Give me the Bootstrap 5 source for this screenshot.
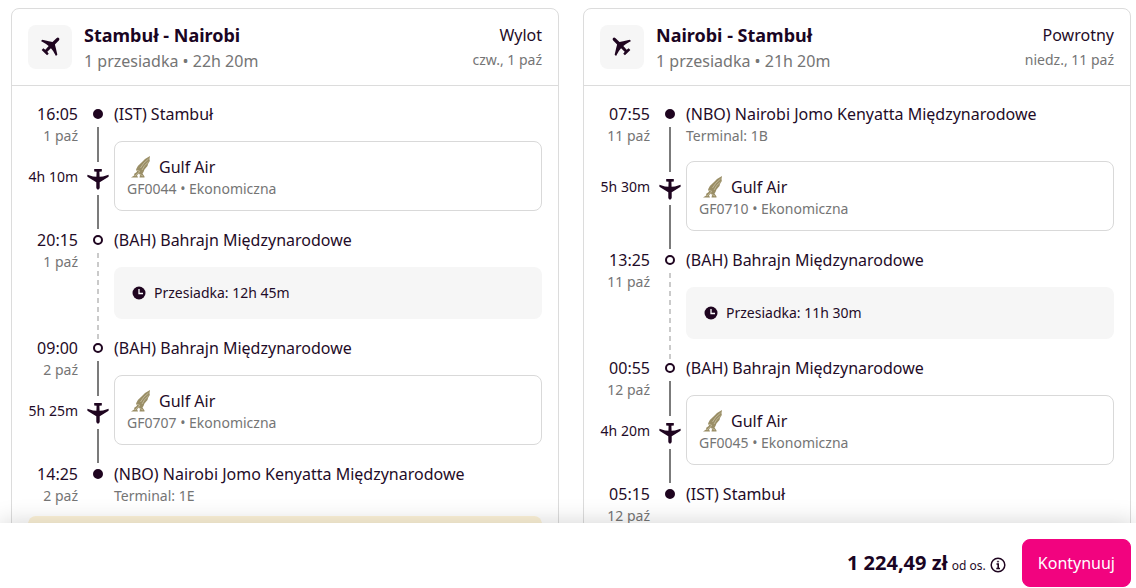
<!DOCTYPE html>
<html lang="pl">
<head>
<meta charset="utf-8">
<meta name="viewport" content="width=device-width, initial-scale=1">
<title>Stambuł - Nairobi</title>
<link href="https://cdn.jsdelivr.net/npm/bootstrap@5.3.0/dist/css/bootstrap.min.css" rel="stylesheet">
<style>
  body { font-family: "Noto Sans", sans-serif; font-size: 16px; line-height: 24px; color: #1f0c28; background: #fff; }
  .trips { min-height: 0; overflow-y: auto; scrollbar-width: none; padding: 8px 5px 0 11px; }
  .trips-grid { display: grid; grid-template-columns: 1fr 1fr; gap: 24px; }
  @media (max-width: 767px) { .trips-grid { grid-template-columns: 1fr; } }
  .trip { border: 1px solid #dcdcdc; border-radius: 8px; }
  .trip-head { padding: 14px 16px; border-bottom: 1px solid #dcdcdc; }
  .trip-head h2 { font-size: 18px; line-height: 24px; font-weight: 700; color: #1a0523; }
  .trip-icon { width: 44px; height: 44px; border-radius: 8px; background: #f6f6f6; flex: none; margin-top: 2px; }
  .trip-icon svg { overflow: visible; }
  .trip-body { padding: 16px; }
  .muted { color: #757575; }
  .fine { font-size: 14px; line-height: 20px; }
  .leg { display: grid; grid-template-columns: 50px 36px 1fr; grid-template-rows: auto 1fr; }
  .when { grid-area: 1 / 1 / 3 / 2; text-align: right; }
  .span-time { grid-area: 1 / 1 / 3 / 2; align-self: center; padding-top: 24px; text-align: right; white-space: nowrap; }
  .rail { grid-area: 1 / 2 / 3 / 3; display: flex; flex-direction: column; align-items: center; padding: 7px 0 0 4px; }
  .place { grid-area: 1 / 3; }
  .segment { grid-area: 2 / 3; margin: 15px 0 17px; border-radius: 8px; }
  .flight { border: 1px solid #d9d9d9; padding: 13px 12px 11px; }
  .layover { background: #f6f6f6; padding: 16px 18px; }
  .stop-dot { width: 10px; height: 10px; border: 2px solid #1f0520; border-radius: 50%; flex: none; }
  .stop-dot.full { background: #1f0520; }
  .track { flex: 1; width: 2px; background: #7b7b7b; }
  .track.upper { margin: 8px 0 6px; }
  .track.lower { margin: 5px 0 -1px; }
  .track.dashes { margin: 8px 0 -4px; background: repeating-linear-gradient(#cacaca 0 5px, transparent 5px 9px); }
  .notice { background: #fdf3d8; border-radius: 8px; min-height: 56px; margin-top: 10px; }
  .pay-bar { position: relative; background: #fff; padding: 16px 5px 1px; box-shadow: 0 0 24px rgba(0,0,0,.18); }
  .price { font-size: 20px; font-weight: 700; color: #1a0523; }
  .price-box { padding-top: 3px; }
  .tiny { font-size: 12px; }
  .btn-pay { --bs-btn-color: #fff; --bs-btn-bg: #f2037f; --bs-btn-hover-color: #fff; --bs-btn-hover-bg: #d4026f; --bs-btn-border-color: #f2037f; --bs-btn-padding-x: 15px; --bs-btn-padding-y: 11px; --bs-btn-border-radius: 8px; --bs-btn-line-height: 24px; }
</style>
</head>
<body>
<svg width="0" height="0" class="position-absolute" aria-hidden="true">
  <defs>
    <symbol id="plane" viewBox="-11 -11 22 22">
      <path fill="#1f0520" d="M-1.700-8.800Q-1.500-10.500 0-10.800Q1.500-10.500 1.700-8.800V-3.200L5-1.300L10.600 2.200V4.200L5 2.600L1.600 2.300L1.400 7.200L3.800 7.600V10H-3.800V7.600L-1.400 7.200L-1.600 2.300L-5 2.600L-10.600 4.200V2.200L-5-1.300L-1.700-3.200Z"/>
    </symbol>
    <symbol id="falcon" viewBox="0 0 20 22">
      <path fill="#9a8e66" d="M19 0L18.500 3L18.800 5L17 8L16.500 10L13.500 13.500L12.500 16L11.500 17.500L13.500 20.500V21.500H8.500L9 19L8 17.500L6 19.200L7 21.500H0L3.500 19.200L3 18L6 15.800L5 13.500Q6.500 9.500 10.500 6.500Q14.500 2 19 0Z"/>
      <path fill="none" stroke="#d9d2b9" stroke-width=".6" d="M17.500 3Q12 7 9.500 12M17.500 6Q13 9 11 14M4 20L8.500 16M5.500 14L9 15.500M9 18.500L12 20"/>
    </symbol>
    <symbol id="clock" viewBox="0 0 14 14">
      <circle cx="7" cy="7" r="6.500" fill="#1f0520"/>
      <path d="M7 3V7.500H11" fill="none" stroke="#fff" stroke-width="1.300"/>
    </symbol>
  </defs>
</svg>

<div class="vh-100 d-flex flex-column">
  <main class="trips flex-grow-1">
    <div class="trips-grid">

      <section class="trip">
        <header class="trip-head d-flex">
          <div class="trip-icon d-flex align-items-center justify-content-center me-2"><svg width="22" height="22"><use href="#plane" transform="rotate(45 11 11) translate(0 -2)"/></svg></div>
          <div class="ms-1 flex-grow-1">
            <h2 class="m-0">Stambuł - Nairobi</h2>
            <div class="muted mt-1 lh-sm">1 przesiadka • 22h 20m</div>
          </div>
          <div class="text-end"><div>Wylot</div><div class="fine muted mt-1 lh-sm">czw., 1 paź</div></div>
        </header>
        <div class="trip-body">
          <div class="leg">
            <div class="when">16:05<div class="fine muted">1 paź</div></div>
            <div class="span-time fine">4h 10m</div>
            <div class="rail"><span class="stop-dot full"></span><span class="track upper"></span><svg width="22" height="22"><use href="#plane" transform="rotate(180 11 11)"/></svg><span class="track lower"></span></div>
            <div class="place">(IST) Stambuł</div>
            <div class="segment flight">
              <div class="d-flex align-items-center"><svg class="ms-1 me-2" width="20" height="22"><use href="#falcon"/></svg>Gulf Air</div>
              <div class="fine muted">GF0044 • Ekonomiczna</div>
            </div>
          </div>
          <div class="leg">
            <div class="when">20:15<div class="fine muted">1 paź</div></div>
            <div class="rail"><span class="stop-dot"></span><span class="track dashes"></span></div>
            <div class="place">(BAH) Bahrajn Międzynarodowe</div>
            <div class="segment layover fine d-flex align-items-center"><svg class="me-2" width="14" height="14"><use href="#clock"/></svg>Przesiadka: 12h 45m</div>
          </div>
          <div class="leg">
            <div class="when">09:00<div class="fine muted">2 paź</div></div>
            <div class="span-time fine">5h 25m</div>
            <div class="rail"><span class="stop-dot"></span><span class="track upper"></span><svg width="22" height="22"><use href="#plane" transform="rotate(180 11 11)"/></svg><span class="track lower"></span></div>
            <div class="place">(BAH) Bahrajn Międzynarodowe</div>
            <div class="segment flight">
              <div class="d-flex align-items-center"><svg class="ms-1 me-2" width="20" height="22"><use href="#falcon"/></svg>Gulf Air</div>
              <div class="fine muted">GF0707 • Ekonomiczna</div>
            </div>
          </div>
          <div class="leg">
            <div class="when">14:25<div class="fine muted">2 paź</div></div>
            <div class="rail"><span class="stop-dot full"></span></div>
            <div class="place">(NBO) Nairobi Jomo Kenyatta Międzynarodowe<div class="fine muted">Terminal: 1E</div></div>
          </div>
          <div class="notice"></div>
        </div>
      </section>

      <section class="trip">
        <header class="trip-head d-flex">
          <div class="trip-icon d-flex align-items-center justify-content-center me-2"><svg width="22" height="22"><use href="#plane" transform="rotate(-45 11 11) translate(0 -2)"/></svg></div>
          <div class="ms-1 flex-grow-1">
            <h2 class="m-0">Nairobi - Stambuł</h2>
            <div class="muted mt-1 lh-sm">1 przesiadka • 21h 20m</div>
          </div>
          <div class="text-end"><div>Powrotny</div><div class="fine muted mt-1 lh-sm">niedz., 11 paź</div></div>
        </header>
        <div class="trip-body">
          <div class="leg">
            <div class="when">07:55<div class="fine muted">11 paź</div></div>
            <div class="span-time fine">5h 30m</div>
            <div class="rail"><span class="stop-dot full"></span><span class="track upper"></span><svg width="22" height="22"><use href="#plane" transform="rotate(180 11 11)"/></svg><span class="track lower"></span></div>
            <div class="place">(NBO) Nairobi Jomo Kenyatta Międzynarodowe<div class="fine muted">Terminal: 1B</div></div>
            <div class="segment flight">
              <div class="d-flex align-items-center"><svg class="ms-1 me-2" width="20" height="22"><use href="#falcon"/></svg>Gulf Air</div>
              <div class="fine muted">GF0710 • Ekonomiczna</div>
            </div>
          </div>
          <div class="leg">
            <div class="when">13:25<div class="fine muted">11 paź</div></div>
            <div class="rail"><span class="stop-dot"></span><span class="track dashes"></span></div>
            <div class="place">(BAH) Bahrajn Międzynarodowe</div>
            <div class="segment layover fine d-flex align-items-center"><svg class="me-2" width="14" height="14"><use href="#clock"/></svg>Przesiadka: 11h 30m</div>
          </div>
          <div class="leg">
            <div class="when">00:55<div class="fine muted">12 paź</div></div>
            <div class="span-time fine">4h 20m</div>
            <div class="rail"><span class="stop-dot"></span><span class="track upper"></span><svg width="22" height="22"><use href="#plane" transform="rotate(180 11 11)"/></svg><span class="track lower"></span></div>
            <div class="place">(BAH) Bahrajn Międzynarodowe</div>
            <div class="segment flight">
              <div class="d-flex align-items-center"><svg class="ms-1 me-2" width="20" height="22"><use href="#falcon"/></svg>Gulf Air</div>
              <div class="fine muted">GF0045 • Ekonomiczna</div>
            </div>
          </div>
          <div class="leg">
            <div class="when">05:15<div class="fine muted">12 paź</div></div>
            <div class="rail"><span class="stop-dot full"></span></div>
            <div class="place">(IST) Stambuł</div>
          </div>
        </div>
      </section>

    </div>
  </main>

  <footer class="pay-bar d-flex justify-content-end align-items-center gap-3">
    <div class="price-box d-flex align-items-center">
      <div><span class="price">1 224,49 zł</span> <span class="tiny">od os.</span></div>
      <button type="button" class="btn p-0 border-0 ms-1 d-flex" aria-label="Informacje o cenie">
        <svg width="16" height="16" viewBox="0 0 16 16" fill="none" stroke="#1f0520"><circle cx="8" cy="8" r="6.800" stroke-width="1.500"/><path stroke-width="1.600" d="M6.500 7H8.200V11.500M6.300 11.500H10"/><circle cx="8" cy="4.600" r=".6"/></svg>
      </button>
    </div>
    <button type="button" class="btn btn-pay">Kontynuuj</button>
  </footer>
</div>
<script src="https://cdn.jsdelivr.net/npm/bootstrap@5.3.0/dist/js/bootstrap.bundle.min.js"></script>
</body>
</html>
